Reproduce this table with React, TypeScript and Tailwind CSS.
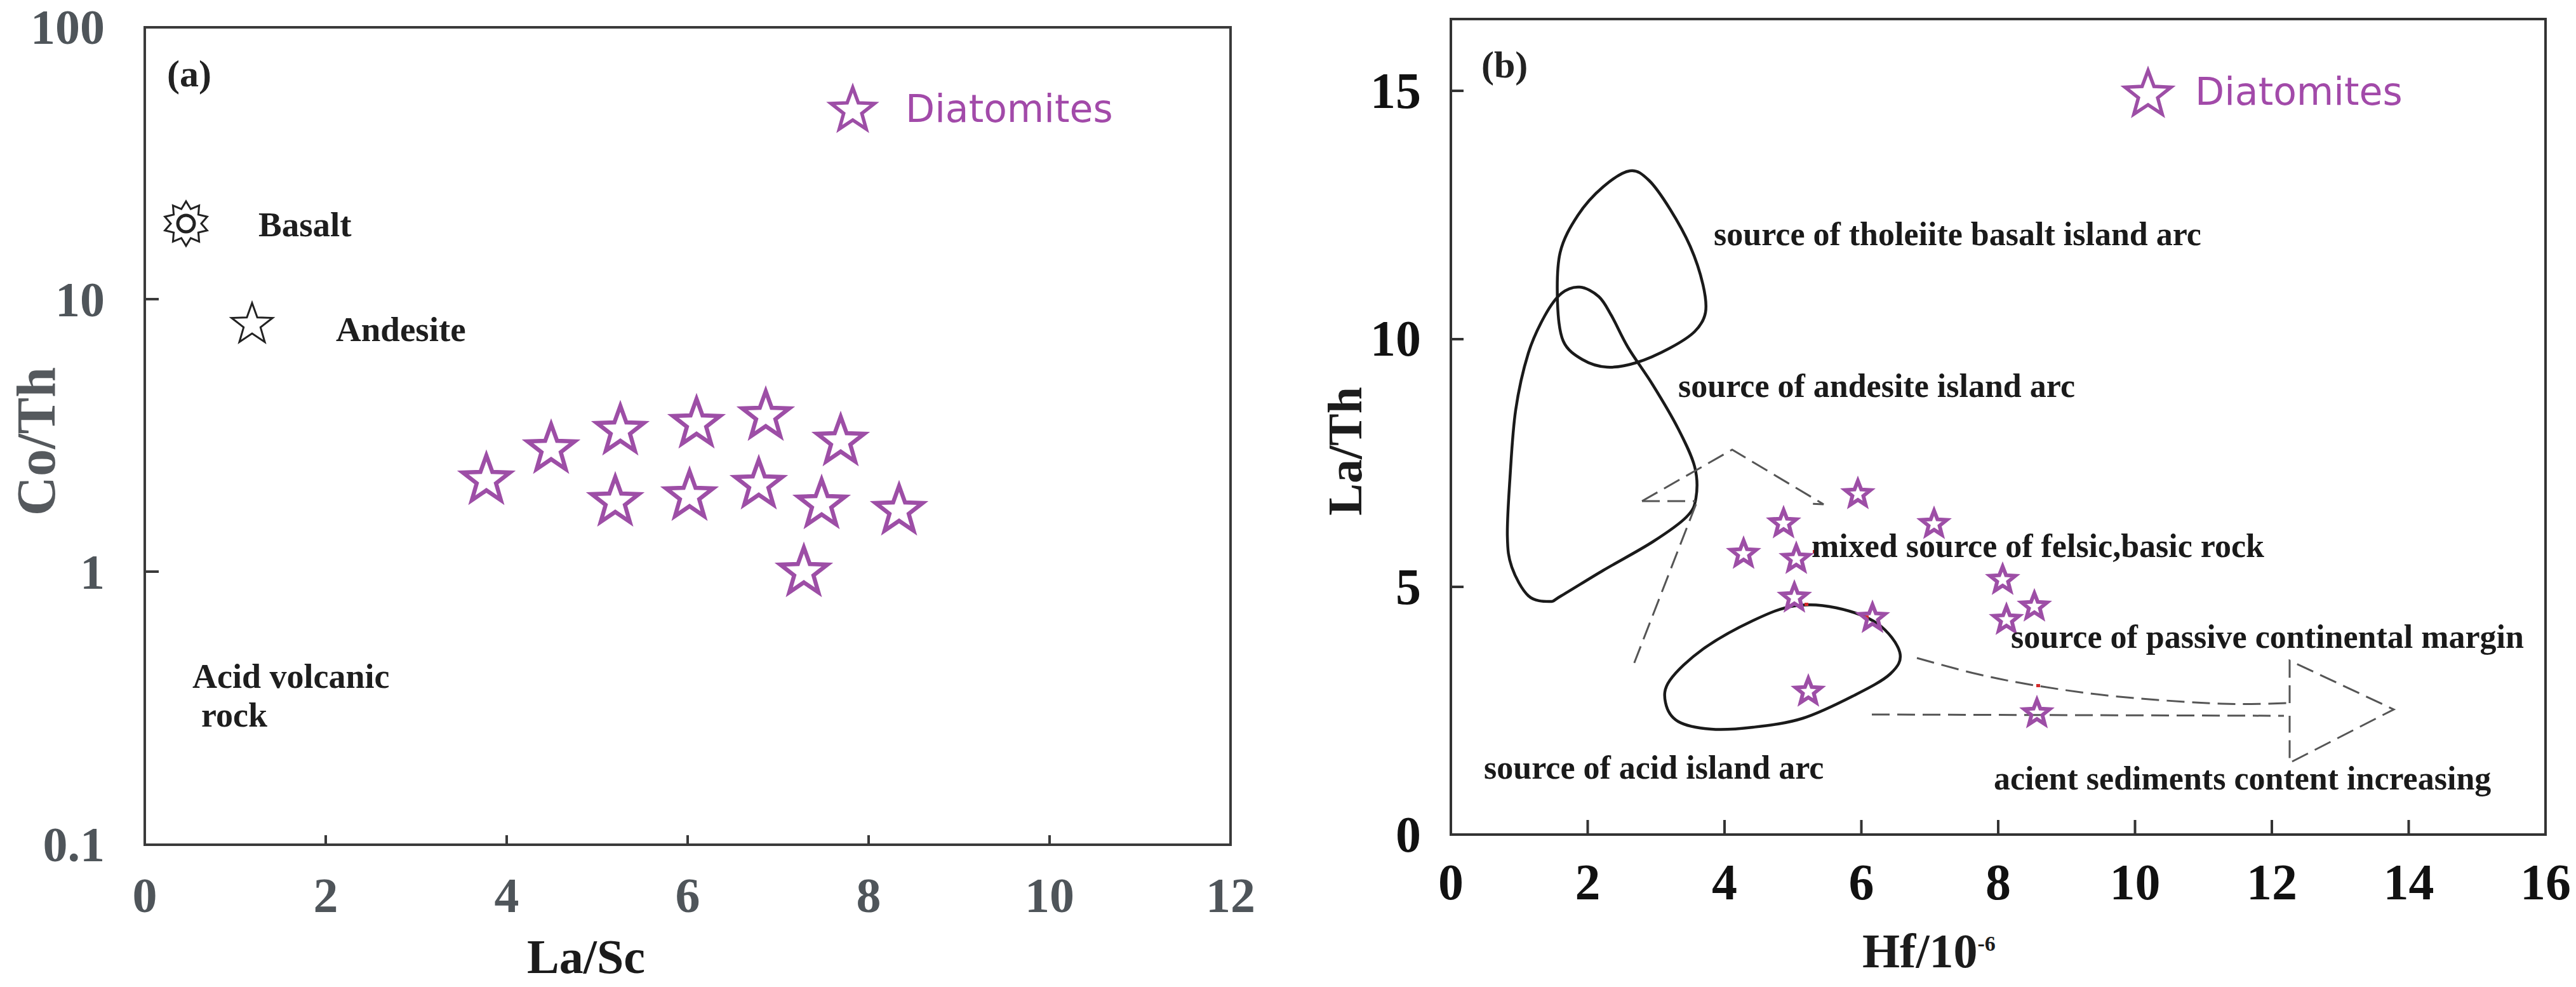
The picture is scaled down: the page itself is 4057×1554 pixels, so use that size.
import React from "react";

type Pt = [number, number];

const PURPLE = "#9d4ea6";
const LEGEND_TEXT = "#a24aa9";

function starPoints(cx: number, cy: number, R: number, r: number, n = 5) {
  const pts: string[] = [];
  for (let i = 0; i < 2 * n; i++) {
    const a = -Math.PI / 2 + (i * Math.PI) / n;
    const rad = i % 2 === 0 ? R : r;
    pts.push(`${(cx + rad * Math.cos(a)).toFixed(1)},${(cy + rad * Math.sin(a)).toFixed(1)}`);
  }
  return pts.join(" ");
}

// catmull-rom through the points, as cubic beziers
function smooth(pts: Pt[], closed: boolean) {
  const n = pts.length;
  const at = (i: number) => (closed ? pts[(i + n) % n] : pts[Math.max(0, Math.min(n - 1, i))]);
  let d = `M${pts[0][0]},${pts[0][1]}`;
  const last = closed ? n : n - 1;
  for (let i = 0; i < last; i++) {
    const p0 = at(i - 1), p1 = at(i), p2 = at(i + 1), p3 = at(i + 2);
    const c1 = [p1[0] + (p2[0] - p0[0]) / 6, p1[1] + (p2[1] - p0[1]) / 6];
    const c2 = [p2[0] - (p3[0] - p1[0]) / 6, p2[1] - (p3[1] - p1[1]) / 6];
    d += ` C${c1[0].toFixed(1)},${c1[1].toFixed(1)} ${c2[0].toFixed(1)},${c2[1].toFixed(1)} ${p2[0]},${p2[1]}`;
  }
  return closed ? d + "Z" : d;
}

function Star({ x, y, R, r, w, color }: { x: number; y: number; R: number; r: number; w: number; color: string }) {
  return (
    <polygon
      points={starPoints(x, y, R, r)}
      fill="none"
      stroke={color}
      strokeWidth={w}
      strokeLinejoin="miter"
      strokeMiterlimit={10}
    />
  );
}

const starsA: Pt[] = [
  [540, 715], [642, 666], [751, 637], [871, 626], [980, 614], [1098, 654],
  [743, 749], [860, 740], [969, 722], [1068, 753], [1190, 763], [1040, 860],
];

const starsB: Pt[] = [
  [643, 750], [526, 796], [463, 844], [546, 852], [763, 797], [543, 913],
  [666, 945], [565, 1061], [871, 885], [921, 927], [877, 948], [925, 1095],
];

const tholeiite: Pt[] = [
  [284, 241], [314, 256], [347, 301], [379, 360], [399, 420], [403, 464], [386, 494],
  [347, 520], [294, 543], [248, 550], [209, 538], [179, 509], [170, 449], [174, 370],
  [202, 311], [242, 266],
];

const andesite: Pt[] = [
  [205, 424], [235, 439], [255, 469], [281, 519], [320, 578], [360, 647], [386, 707],
  [388, 756], [373, 786], [320, 825], [242, 870], [176, 910], [157, 919], [124, 910],
  [98, 865], [91, 816], [95, 726], [104, 618], [124, 528], [150, 469], [176, 434],
];

const acidArc: Pt[] = [
  [340, 1078], [347, 1043], [399, 994], [478, 949], [543, 926], [609, 929], [674, 954],
  [709, 999], [694, 1033], [635, 1068], [556, 1103], [478, 1117], [412, 1120], [360, 1108],
];

const sedimentCurve: Pt[] = [
  [736, 1008], [830, 1033], [927, 1052], [1055, 1069], [1217, 1080], [1323, 1079],
];

function YTicks({ labels, height, className }: { labels: string[]; height: number; className: string }) {
  return (
    <div className="flex flex-col justify-between" style={{ height }}>
      {labels.map((l) => (
        <div key={l} className="h-0 flex items-center justify-end">
          <span className={`whitespace-nowrap leading-none font-bold ${className}`}>{l}</span>
        </div>
      ))}
    </div>
  );
}

function PanelA() {
  return (
    <div className="w-[2000px] shrink-0 flex items-start">
      <div className="w-[114px] h-[1330px] pt-[60px] flex items-center justify-center">
        <span className="block [writing-mode:vertical-rl] rotate-180 whitespace-nowrap text-[86px] leading-none font-bold text-[#55595d]">
          Co/Th
        </span>
      </div>
      <div className="w-[51px] pt-[43px]">
        <YTicks labels={["100", "10", "1", "0.1"]} height={1287} className="text-[78px] text-[#4f555a]" />
      </div>
      <div className="ml-[61px] pt-[41px] flex flex-col">
        <div className="relative w-[1716px] h-[1291px]">
          <svg width="1716" height="1291" viewBox="0 0 1716 1291" className="absolute inset-0">
            <rect x="2" y="2" width="1710" height="1287" fill="none" stroke="#3a3a3a" strokeWidth="4" />
            <line x1="2" y1="430" x2="24" y2="430" stroke="#3a3a3a" strokeWidth="4" />
            <line x1="2" y1="859" x2="24" y2="859" stroke="#3a3a3a" strokeWidth="4" />
            {[287, 572, 857, 1142, 1427].map((x) => (
              <line key={x} x1={x} y1="1289" x2={x} y2="1274" stroke="#3a3a3a" strokeWidth="4" />
            ))}
            {/* basalt marker */}
            <polygon points={starPoints(67, 311, 35, 24, 10)} fill="none" stroke="#222" strokeWidth="3" />
            <circle cx="67" cy="311" r="13" fill="none" stroke="#222" strokeWidth="5" />
            <Star x={171} y={470} R={34} r={14} w={3} color="#222" />
            <Star x={1117} y={133} R={36} r={15} w={5.5} color={PURPLE} />
            {starsA.map(([x, y], i) => (
              <Star key={i} x={x} y={y} R={39} r={16} w={6.5} color={PURPLE} />
            ))}
          </svg>
          <div className="absolute left-[37px] top-[45px] text-[60px] leading-none font-bold text-[#222]">(a)</div>
          <div className="absolute left-[181px] top-[285px] text-[55px] leading-none font-bold text-[#1e1e1e]">Basalt</div>
          <div className="absolute left-[303px] top-[450px] text-[55px] leading-none font-bold text-[#1e1e1e]">Andesite</div>
          <div className="absolute left-[77px] top-[994px] text-[54px] leading-[61px] font-bold text-[#1e1e1e] whitespace-nowrap">
            Acid volcanic
            <br />
            <span className="pl-[14px]">rock</span>
          </div>
          <div
            className="absolute left-[1200px] top-[100px] text-[60px] leading-none font-['DejaVu_Sans',sans-serif]"
            style={{ color: LEGEND_TEXT }}
          >
            Diatomites
          </div>
        </div>
        <div className="mt-[39px] ml-[2px] w-[1710px] flex justify-between">
          {["0", "2", "4", "6", "8", "10", "12"].map((l) => (
            <div key={l} className="w-0 flex justify-center">
              <span className="whitespace-nowrap text-[78px] leading-none font-bold text-[#4f555a]">{l}</span>
            </div>
          ))}
        </div>
        <div className="mt-[19px] ml-[2px] w-[1390px] text-center text-[76px] leading-none font-bold text-[#1b1b1b]">
          La/Sc
        </div>
      </div>
    </div>
  );
}

function PanelB() {
  const ink = "#1a1a1a";
  const dash = { stroke: "#555", strokeWidth: 3, strokeDasharray: "28 12", fill: "none" } as const;
  return (
    <div className="w-[2057px] shrink-0 flex items-start">
      <div className="w-[236px] h-[1314px] pt-[106px] flex items-center justify-center">
        <span className="block [writing-mode:vertical-rl] rotate-180 whitespace-nowrap text-[76px] leading-none font-bold text-[#1c1c1c]">
          La/Th
        </span>
      </div>
      <div className="w-[2px] pt-[143px]">
        <YTicks labels={["15", "10", "5", "0"]} height={1171} className="text-[80px] text-[#111]" />
      </div>
      <div className="ml-[45px] pt-[28px] flex flex-col">
        <div className="relative w-[1728px] h-[1288px]">
          <svg width="1728" height="1288" viewBox="0 0 1728 1288" className="absolute inset-0">
            <rect x="2" y="2" width="1724" height="1284" fill="none" stroke="#333" strokeWidth="4" />
            {[115, 506, 896].map((y) => (
              <line key={y} x1="2" y1={y} x2="22" y2={y} stroke="#333" strokeWidth="4" />
            ))}
            {[1, 2, 3, 4, 5, 6, 7].map((k) => (
              <line key={k} x1={2 + 215.5 * k} y1="1286" x2={2 + 215.5 * k} y2="1263" stroke="#333" strokeWidth="4" />
            ))}

            <path d={smooth(tholeiite, true)} fill="none" stroke="#1a1a1a" strokeWidth="4.5" />
            <path d={smooth(andesite, true)} fill="none" stroke="#1a1a1a" strokeWidth="4.5" />
            <path d={smooth(acidArc, true)} fill="none" stroke="#1a1a1a" strokeWidth="4.5" />

            {/* dashed arrows */}
            <polyline points="303,761 445,680 589,766 567,765" {...dash} />
            <line x1="303" y1="761" x2="387" y2="761" {...dash} />
            <line x1="388" y1="766" x2="288" y2="1023" {...dash} />
            <path d={smooth(sedimentCurve, false)} {...dash} />
            <line x1="665" y1="1097" x2="1314" y2="1099" {...dash} />
            <polyline points="1323,1079 1323,1012 1487,1089 1323,1173 1323,1099" {...dash} />

            {[[575, 841], [562, 924], [657, 944], [927, 1052]].map(([x, y]) => (
              <rect key={x} x={x - 3} y={y - 3} width="6" height="5" fill="#d42a2a" />
            ))}

            {starsB.map(([x, y], i) => (
              <Star key={i} x={x} y={y} R={21} r={9} w={6} color={PURPLE} />
            ))}
            <Star x={1100} y={121} R={38} r={16} w={5.5} color={PURPLE} />
          </svg>
          <div className="absolute left-[50px] top-[44px] text-[60px] leading-none font-bold text-[#222]">(b)</div>
          {[
            { t: "source of tholeiite basalt island arc", x: 416, y: 315 },
            { t: "source of andesite island arc", x: 360, y: 554 },
            { t: "mixed source of felsic,basic rock", x: 570, y: 806 },
            { t: "source of passive continental margin", x: 884, y: 949 },
            { t: "source of acid island arc", x: 54, y: 1155 },
            { t: "acient sediments content increasing", x: 857, y: 1172 },
          ].map((a) => (
            <div
              key={a.t}
              className="absolute whitespace-nowrap text-[52px] leading-none font-bold"
              style={{ left: a.x, top: a.y, color: ink }}
            >
              {a.t}
            </div>
          ))}
          <div
            className="absolute left-[1174px] top-[86px] text-[60px] leading-none font-['DejaVu_Sans',sans-serif]"
            style={{ color: LEGEND_TEXT }}
          >
            Diatomites
          </div>
        </div>
        <div className="mt-[33px] ml-[2px] w-[1724px] flex justify-between">
          {["0", "2", "4", "6", "8", "10", "12", "14", "16"].map((l) => (
            <div key={l} className="w-0 flex justify-center">
              <span className="whitespace-nowrap text-[80px] leading-none font-bold text-[#111]">{l}</span>
            </div>
          ))}
        </div>
        <div className="mt-[30px] ml-[650px] text-[76px] leading-none font-bold text-[#1c1c1c] whitespace-nowrap">
          Hf/10<sup className="text-[34px] -top-[26px]">-6</sup>
        </div>
      </div>
    </div>
  );
}

export default function App() {
  return (
    <div className="w-[4057px] h-[1554px] bg-white flex overflow-hidden font-['Liberation_Serif','Times_New_Roman',serif]">
      <PanelA />
      <PanelB />
    </div>
  );
}
